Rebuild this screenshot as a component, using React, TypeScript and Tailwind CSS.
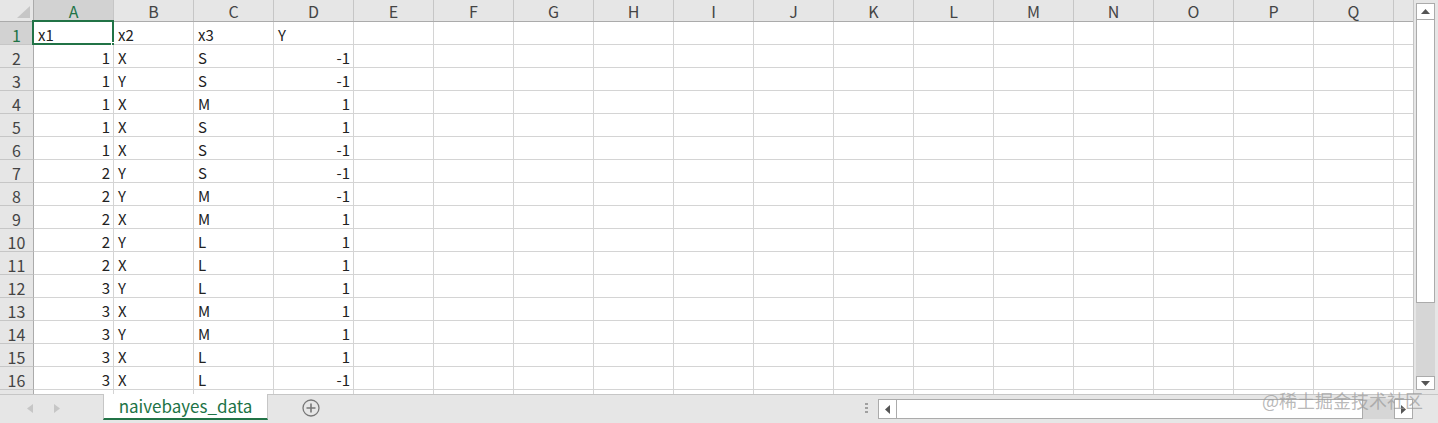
import React from 'react';

const COLS = ['A', 'B', 'C', 'D', 'E', 'F', 'G', 'H', 'I', 'J', 'K', 'L', 'M', 'N', 'O', 'P', 'Q'];

const data: (string | number)[][] = [
  ['x1', 'x2', 'x3', 'Y'],
  [1, 'X', 'S', -1],
  [1, 'Y', 'S', -1],
  [1, 'X', 'M', 1],
  [1, 'X', 'S', 1],
  [1, 'X', 'S', -1],
  [2, 'Y', 'S', -1],
  [2, 'Y', 'M', -1],
  [2, 'X', 'M', 1],
  [2, 'Y', 'L', 1],
  [2, 'X', 'L', 1],
  [3, 'Y', 'L', 1],
  [3, 'X', 'M', 1],
  [3, 'Y', 'M', 1],
  [3, 'X', 'L', 1],
  [3, 'X', 'L', -1],
];

const font = "font-['Noto_Sans_CJK_SC','Noto_Sans',sans-serif]";

function Cell({ value, selected }: { value?: string | number; selected?: boolean }) {
  const isNum = typeof value === 'number';
  return (
    <div
      className={`relative w-[80px] h-[23px] shrink-0 border-r border-b border-[#d4d4d4] bg-white flex items-start pt-[3px] text-[15px] leading-[20px] text-[#222] ${
        isNum ? 'justify-end pr-[3px]' : 'justify-start pl-[4px]'
      }`}
    >
      {value !== undefined ? String(value) : ''}
      {selected && (
        <>
          <div className="absolute -left-[2px] -top-[2px] w-[82px] h-[25px] border-2 border-[#217346]" />
          <div className="absolute -right-[4px] -bottom-[4px] w-[6px] h-[6px] bg-[#217346] border border-white" />
        </>
      )}
    </div>
  );
}

export default function App() {
  return (
    <div className={`relative w-[1438px] h-[423px] overflow-hidden bg-[#e6e6e6] flex flex-col ${font}`}>
      <div className="flex h-[394px]">
        {/* grid */}
        <div className="w-[1414px] h-[394px] overflow-hidden flex flex-col bg-white border-r border-[#c6c6c6]">
          {/* column headers */}
          <div className="flex h-[22px] shrink-0 bg-[#e6e6e6] border-b border-[#ababab]">
            <div className="relative w-[34px] shrink-0 border-r border-[#ababab]">
              <svg className="absolute right-[3px] bottom-[3px]" width="13" height="12" viewBox="0 0 13 12">
                <polygon points="13,0 13,12 0,12" fill="#c6c6c6" />
              </svg>
            </div>
            {COLS.map((c, i) => (
              <div
                key={c}
                className={`w-[80px] shrink-0 flex items-center justify-center pt-[1px] border-r border-[#c6c6c6] text-[16px] leading-[20px] ${
                  i === 0 ? 'bg-[#d2d2d2] text-[#217346]' : 'text-[#444]'
                }`}
              >
                {c}
              </div>
            ))}
            <div className="w-[19px] shrink-0" />
          </div>
          {/* rows */}
          {[...data, null].map((row, r) => (
            <div key={r} className="flex shrink-0">
              <div
                className={`w-[34px] h-[23px] shrink-0 flex items-start justify-center pt-[3px] border-r border-b border-[#ababab] border-b-[#c6c6c6] text-[16px] leading-[20px] ${
                  r === 0 ? 'bg-[#d2d2d2] text-[#217346]' : 'bg-[#e6e6e6] text-[#444]'
                }`}
              >
                {row ? r + 1 : ''}
              </div>
              {COLS.map((c, i) => (
                <Cell key={c} value={row ? row[i] : undefined} selected={r === 0 && i === 0} />
              ))}
              <div className="w-[19px] h-[23px] shrink-0 border-b border-[#d4d4d4]" />
            </div>
          ))}
        </div>
        {/* vertical scrollbar */}
        <div className="w-[24px] pl-[2px] pt-[3px]">
          <div className="w-[19px] h-[387px] flex flex-col bg-[#d6d6d6]">
            <div className="h-[17px] bg-white border border-[#ababab] flex items-center justify-center">
              <svg width="9" height="5" viewBox="0 0 9 5">
                <polygon points="0,5 9,5 4.5,0" fill="#555" />
              </svg>
            </div>
            <div className="h-[283px] bg-white border border-t-0 border-[#ababab]" />
            <div className="flex-1" />
            <div className="h-[14px] bg-white border border-[#ababab] flex items-center justify-center">
              <svg width="9" height="5" viewBox="0 0 9 5">
                <polygon points="0,0 9,0 4.5,5" fill="#555" />
              </svg>
            </div>
          </div>
        </div>
      </div>

      {/* sheet tabs bar */}
      <div className="flex h-[29px] border-t border-[#c6c6c6]">
        <div className="w-[103px] shrink-0 flex items-center pl-[27px] gap-[21px] pb-[2px]">
          <svg width="6" height="9" viewBox="0 0 6 9">
            <polygon points="6,0 6,9 0,4.5" fill="#c6c6c6" />
          </svg>
          <svg width="6" height="9" viewBox="0 0 6 9">
            <polygon points="0,0 0,9 6,4.5" fill="#c6c6c6" />
          </svg>
        </div>
        <div className="w-[165px] shrink-0 -mt-[1px] h-[26px] bg-white border-x border-[#c6c6c6] border-b-2 border-b-[#217346] flex items-center justify-center text-[17px] leading-[22px] text-[#217346]">
          naivebayes_data
        </div>
        <div className="w-[86px] shrink-0 flex items-center justify-center pb-[2px]">
          <svg width="18" height="18" viewBox="0 0 18 18">
            <circle cx="9" cy="9" r="8" fill="none" stroke="#777" strokeWidth="1.3" />
            <path d="M9 4.5v9M4.5 9h9" stroke="#777" strokeWidth="1.6" />
          </svg>
        </div>
        <div className="flex-1" />
        <div className="w-[24px] shrink-0 flex flex-col items-center justify-center gap-[2px] pb-[2px]">
          <div className="w-[3px] h-[2px] bg-[#a0a0a0]" />
          <div className="w-[3px] h-[2px] bg-[#a0a0a0]" />
          <div className="w-[3px] h-[2px] bg-[#a0a0a0]" />
        </div>
        <div className="w-[535px] shrink-0 pt-[4px]">
          <div className="flex h-[20px] bg-[#d6d6d6]">
            <div className="w-[19px] bg-white border border-[#ababab] flex items-center justify-center">
              <svg width="5" height="9" viewBox="0 0 5 9">
                <polygon points="5,0 5,9 0,4.5" fill="#555" />
              </svg>
            </div>
            <div className="w-[466px] bg-white border-y border-r border-[#ababab]" />
            <div className="flex-1" />
            <div className="w-[19px] bg-white border border-[#ababab] flex items-center justify-center">
              <svg width="5" height="9" viewBox="0 0 5 9">
                <polygon points="0,0 0,9 5,4.5" fill="#555" />
              </svg>
            </div>
          </div>
        </div>
        <div className="w-[25px] shrink-0" />
      </div>

      {/* watermark */}
      <div className="absolute left-[1262px] top-[389px] text-[18px] leading-[22px] text-[#9a9a9a]/70 pointer-events-none">
        @稀土掘金技术社区
      </div>
    </div>
  );
}
